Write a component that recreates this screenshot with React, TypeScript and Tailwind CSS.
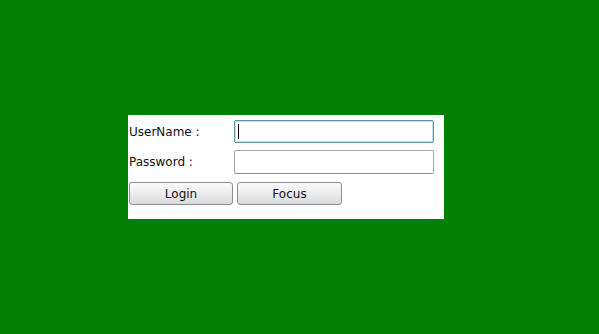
export default function App() {
  return (
    <div className="h-[334px] w-full bg-[#037f03] pl-[128px] pt-[115px] font-['DejaVu_Sans',sans-serif] text-[12px] text-[#111]">
      <div className="flex h-[104px] w-[316px] flex-col bg-white pl-[1px] pt-[5px]">
        <div className="flex h-[23px] items-center">
          <div className="w-[105px]">UserName :</div>
          <div className="flex h-[23px] w-[200px] items-center rounded-[2px] border border-[#5e95a8] bg-white pl-[3px] shadow-[inset_0_0_0_1px_#c5dde6]">
            <div className="h-[15px] w-px bg-black" />
          </div>
        </div>
        <div className="mt-[7px] flex h-[24px] items-center">
          <div className="w-[105px]">Password :</div>
          <div className="h-[24px] w-[200px] rounded-[2px] border border-[#a0a6ad] border-b-[#8b9096] bg-white" />
        </div>
        <div className="mt-[8px] flex gap-[4px]">
          <button className="h-[23px] w-[104px] rounded-[3px] border border-[#8a8f96] bg-gradient-to-b from-[#fbfbfb] via-[#ececec] to-[#d8d9db] text-center leading-[20px]">
            Login
          </button>
          <button className="h-[23px] w-[105px] rounded-[3px] border border-[#8a8f96] bg-gradient-to-b from-[#fbfbfb] via-[#ececec] to-[#d8d9db] text-center leading-[20px]">
            Focus
          </button>
        </div>
      </div>
    </div>
  );
}
